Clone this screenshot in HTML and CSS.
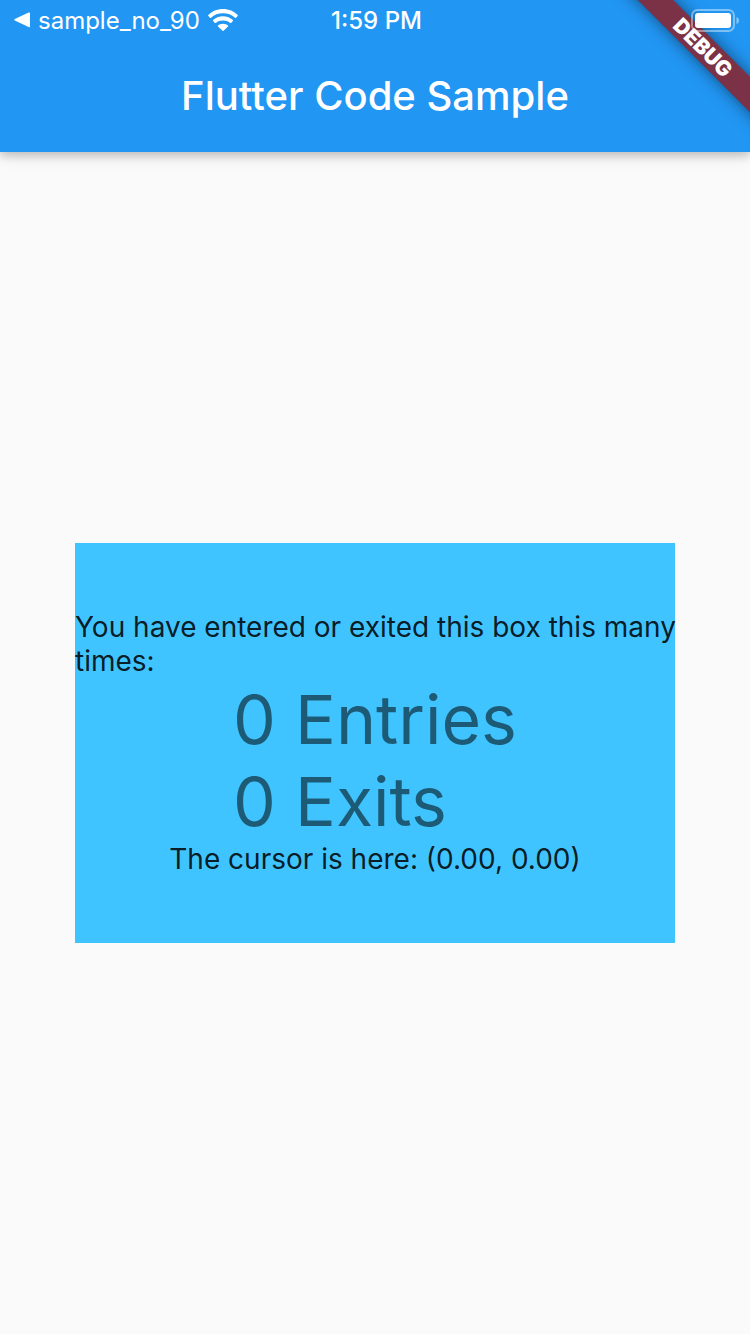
FILE: index.html
```html
<!DOCTYPE html>
<html lang="en">
<head>
<meta charset="utf-8">
<meta name="viewport" content="width=device-width, initial-scale=1">
<title>Flutter Code Sample</title>
<link rel="stylesheet" href="styles.css">
</head>
<body>
<div class="page">
  <header class="app-bar">
    <div class="status-bar">
      <button class="back" type="button">
        <svg class="back-icon" viewBox="0 0 16 16" aria-hidden="true"><path d="M.8 7.1 14.6.6Q16 .1 16 1.4V14.2Q16 15.6 14.6 15L.8 8.5Q-.4 7.8.8 7.1Z" fill="#fff"/></svg>
        <span class="back-label">sample_no_90</span>
        <svg class="wifi" viewBox="0 0 30 22" aria-hidden="true">
          <path d="M15 0C21 0 26 2.300 29.700 6Q30.100 6.500 29.700 7L28 8.700Q27.500 9.100 27 8.700C23.700 5.600 19.600 4.200 15 4.200S6.300 5.600 3 8.700Q2.500 9.100 2 8.700L.3 7Q-.1 6.500.3 6C4 2.300 9 0 15 0ZM15 7.300C19 7.300 22.300 8.700 24.900 11.100Q25.300 11.600 24.900 12.100L23.100 13.900Q22.600 14.300 22.100 13.900C20.100 12.300 17.700 11.500 15 11.500S9.900 12.300 7.900 13.900Q7.400 14.300 6.900 13.900L5.100 12.100Q4.700 11.600 5.100 11.100C7.700 8.700 11 7.300 15 7.300ZM15 14.700C17 14.700 18.800 15.400 20 16.500Q20.400 17 20 17.400L15.500 21.800Q15 22.200 14.500 21.800L10 17.400Q9.600 17 10 16.500C11.200 15.400 13 14.700 15 14.700Z" fill="#fff"/>
        </svg>
      </button>
      <time class="clock">1:59 PM</time>
      <svg class="battery" viewBox="0 0 48 23" role="img" aria-label="Battery full">
        <rect x="1" y="1" width="42" height="21" rx="5.500" fill="none" stroke="#fff" stroke-opacity=".42" stroke-width="2"/>
        <rect x="4" y="4" width="36" height="15" rx="3" fill="#fff"/>
        <path d="M45.500 8Q48 8.800 48 11.500T45.500 15Z" fill="#fff" fill-opacity=".48"/>
      </svg>
    </div>
    <h1 class="title">Flutter Code Sample</h1>
    <div class="corner"><div class="banner">DEBUG</div></div>
  </header>
  <main class="content">
    <section class="box">
      <p class="text intro">You have entered or exited this box this many times:</p>
      <div class="counts">
        <p>0 Entries</p>
        <p>0 Exits</p>
      </div>
      <p class="text">The cursor is here: (0.00, 0.00)</p>
    </section>
  </main>
</div>
</body>
</html>
```
FILE: styles.css
```css
* {
  box-sizing: border-box;
}

body {
  margin: 0;
  font-family: Inter, "Liberation Sans", sans-serif;
  background: #fafafa;
}

h1,
p {
  margin: 0;
}

.page {
  display: flex;
  flex-direction: column;
  min-height: 100vh;
  overflow: hidden;
}

.app-bar {
  position: relative;
  background: #2196f3;
  color: #fff;
  box-shadow: 0 4px 8px rgba(0, 0, 0, 0.15), 0 2px 16px rgba(0, 0, 0, 0.15);
}

.status-bar {
  position: relative;
  z-index: 2;
  display: grid;
  grid-template-columns: 1fr auto 1fr;
  align-items: center;
  height: 40px;
  padding: 0 11px 0 14px;
}

.back {
  display: flex;
  align-items: center;
  gap: 8px;
  padding: 0;
  border: 0;
  background: none;
  color: inherit;
  font: 400 24px/38px Inter, "Liberation Sans", sans-serif;
}

.back-icon {
  width: 16px;
  height: 16px;
}

.back-label,
.clock {
  padding-top: 2px;
}

.wifi {
  width: 30px;
  height: 22px;
}

.clock {
  font-size: 24px;
  font-weight: 500;
  line-height: 38px;
}

.battery {
  justify-self: end;
  width: 48px;
  height: 23px;
}

.title {
  padding: 0 32px;
  font-size: 40px;
  font-weight: 500;
  line-height: 112px;
  text-align: center;
}

.corner {
  position: absolute;
  z-index: 1;
  top: 0;
  right: 0;
  display: grid;
  place-content: center;
  width: 95px;
  height: 95px;
}

.banner {
  width: 240px;
  background: #7b3247;
  box-shadow: 0 0 16px rgba(0, 0, 0, 0.5);
  font-size: 21px;
  font-weight: 900;
  line-height: 25px;
  text-align: center;
  transform: rotate(45deg);
}

.content {
  flex: 1;
  display: grid;
  place-items: center;
}

.box {
  display: flex;
  flex-direction: column;
  align-items: center;
  justify-content: center;
  width: 80%;
  min-height: 400px;
  background: #40c4ff;
}

.text {
  color: rgba(0, 0, 0, 0.87);
  font-size: 28px;
  line-height: 34px;
}

.intro {
  align-self: stretch;
  margin-right: -4px;
}

.counts {
  color: rgba(0, 0, 0, 0.54);
  font-size: 68px;
  line-height: 82px;
}
```
